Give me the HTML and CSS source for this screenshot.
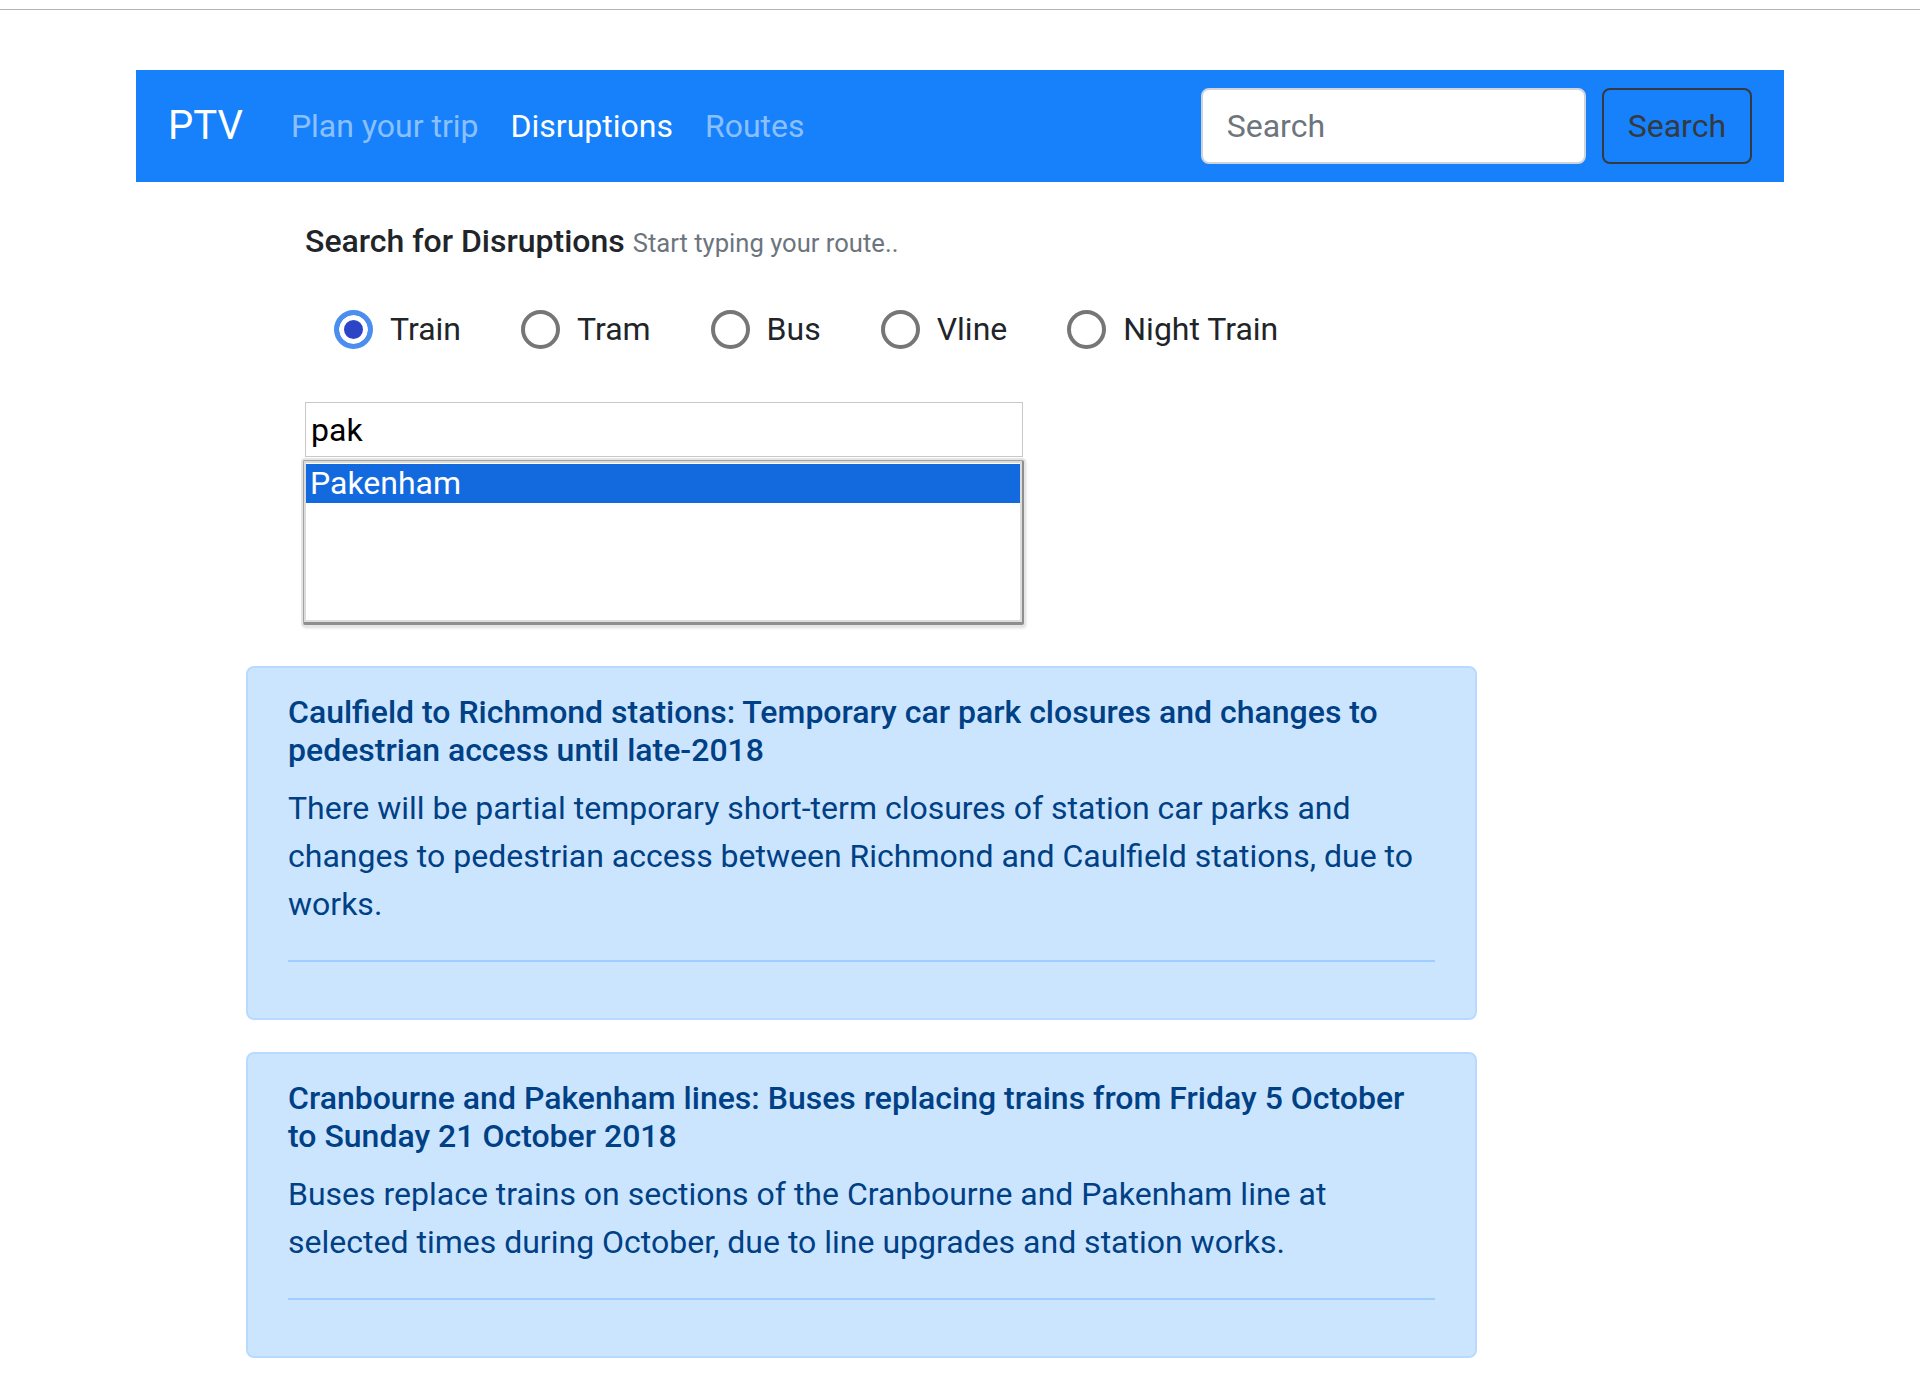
FILE: index.html
```html
<!DOCTYPE html>
<html lang="en">
<head>
<meta charset="utf-8">
<title>PTV Disruptions</title>
<link rel="stylesheet" href="styles.css">
</head>
<body>
<div class="topline"></div>
<nav class="navbar">
  <a class="brand" href="#">PTV</a>
  <ul class="nav">
    <li><a class="nav-link" href="#">Plan your trip</a></li>
    <li><a class="nav-link active" href="#">Disruptions</a></li>
    <li><a class="nav-link" href="#">Routes</a></li>
  </ul>
  <form class="search-form">
    <input class="search-input" type="text" placeholder="Search">
    <button class="search-btn" type="button">Search</button>
  </form>
</nav>
<main class="main">
  <section class="finder">
    <div class="title-row"><span class="title">Search for Disruptions</span> <small class="hint">Start typing your route..</small></div>
    <div class="radios">
      <label class="radio"><span class="dot checked"></span><span class="radio-text">Train</span></label>
      <label class="radio"><span class="dot"></span><span class="radio-text">Tram</span></label>
      <label class="radio"><span class="dot"></span><span class="radio-text">Bus</span></label>
      <label class="radio"><span class="dot"></span><span class="radio-text">Vline</span></label>
      <label class="radio"><span class="dot"></span><span class="radio-text">Night Train</span></label>
    </div>
    <input class="route-input" type="text" value="pak">
    <div class="suggest">
      <div class="suggest-inner">
        <div class="option selected">Pakenham</div>
      </div>
    </div>
  </section>
  <section class="alerts">
    <div class="alert">
      <h4 class="alert-heading">Caulfield to Richmond stations: Temporary car park closures and changes to pedestrian access until late-2018</h4>
      <p class="alert-text">There will be partial temporary short-term closures of station car parks and changes to pedestrian access between Richmond and Caulfield stations, due to works.</p>
      <hr class="alert-rule">
    </div>
    <div class="alert">
      <h4 class="alert-heading">Cranbourne and Pakenham lines: Buses replacing trains from Friday 5 October to Sunday 21 October 2018</h4>
      <p class="alert-text">Buses replace trains on sections of the Cranbourne and Pakenham line at selected times during October, due to line upgrades and station works.</p>
      <hr class="alert-rule">
    </div>
  </section>
</main>
</body>
</html>
```
FILE: styles.css
```css
* { box-sizing: border-box; }
html, body { margin: 0; padding: 0; background: #fff; }
body {
  font-family: Roboto, "Liberation Sans", Arial, sans-serif;
  font-size: 32px;
  line-height: 48px;
  color: #212529;
}
.topline { height: 1px; margin-top: 9px; background: #b3b3b3; }

.navbar {
  margin: 60px 136px 0;
  height: 112px;
  padding: 16px 32px;
  background: #1681fb;
  display: flex;
  align-items: center;
}
.brand {
  color: #fff;
  text-decoration: none;
  font-size: 40px;
  line-height: 60px;
  padding: 10px 0;
  margin-right: 32px;
}
.nav { list-style: none; margin: 0; padding: 0; display: flex; }
.nav-link {
  display: block;
  padding: 16px;
  color: rgba(255,255,255,.5);
  text-decoration: none;
  font-size: 32px;
  line-height: 48px;
}
.nav-link.active { color: #fff; }
.search-form { margin: 0 0 0 auto; display: flex; align-items: center; }
.search-input {
  width: 385px;
  height: 76px;
  padding: 12px 24px;
  border: 2px solid #ced4da;
  border-radius: 8px;
  font-family: inherit;
  font-size: 32px;
  line-height: 48px;
  color: #495057;
  background: #fff;
  outline: none;
}
.search-input::placeholder { color: #6c757d; }
.search-btn {
  margin-left: 16px;
  height: 76px;
  padding: 12px 24px;
  border: 2px solid #343a40;
  border-radius: 8px;
  background: transparent;
  color: #343a40;
  font-family: inherit;
  font-size: 32px;
  line-height: 48px;
}

.main { margin-left: 246px; width: 1231px; }
.finder { padding-left: 59px; }
.title-row { padding-top: 35px; height: 83px; white-space: nowrap; }
.title { font-size: 32px; font-weight: 500; color: #212529; }
.hint { font-size: 25.6px; color: #6c757d; }

.radios {
  margin-top: 40px;
  height: 48px;
  padding-left: 29px;
  display: flex;
  align-items: center;
}
.radio { display: flex; align-items: center; margin-right: 60px; color: #212529; }
.dot {
  width: 39px;
  height: 39px;
  border-radius: 50%;
  border: 4px solid #767676;
  background: #fff;
  margin-right: 17px;
  flex: none;
}
.dot.checked {
  border: 5px solid #4a8ef0;
  background: #2b45c6;
  box-shadow: inset 0 0 0 5px #fff;
}

.route-input {
  display: block;
  margin-top: 49px;
  width: 718px;
  height: 55px;
  padding: 0 5px;
  border: 1px solid #c8c8c8;
  font-family: inherit;
  font-size: 32px;
  color: #000;
  background: #fff;
  outline: none;
}
.suggest {
  margin-top: 3px;
  margin-left: -2px;
  width: 721px;
  height: 165px;
  border: 1px solid #a2a2a2;
  border-right: 2px solid #8e8e8e;
  border-bottom: 3px solid #8e8e8e;
  border-radius: 2px;
  padding: 2px;
  background: #dcdcdc;
  box-shadow: 0 0 0 2px #e5e5e5, 1px 2px 3px 1px rgba(0,0,0,.14);
}
.suggest-inner { height: 100%; background: #fff; padding-top: 1px; }
.option { padding: 0 4px; line-height: 39px; font-size: 32px; color: #000; }
.option.selected { background: #1369de; color: #fff; }

.alerts { margin-top: 41px; }
.alert {
  background: #cce5ff;
  border: 2px solid #b8daff;
  border-radius: 8px;
  padding: 25px 40px 24px;
  color: #004085;
  margin-bottom: 32px;
}
.alert-heading {
  margin: 0 0 14px;
  font-size: 32px;
  font-weight: 500;
  line-height: 1.2;
  color: #004085;
}
.alert-text { margin: 0 0 32px; font-size: 32px; line-height: 48px; }
.alert-rule {
  margin: 32px 0;
  border: 0;
  border-top: 2px solid #9fcdff;
  height: 0;
}
```
